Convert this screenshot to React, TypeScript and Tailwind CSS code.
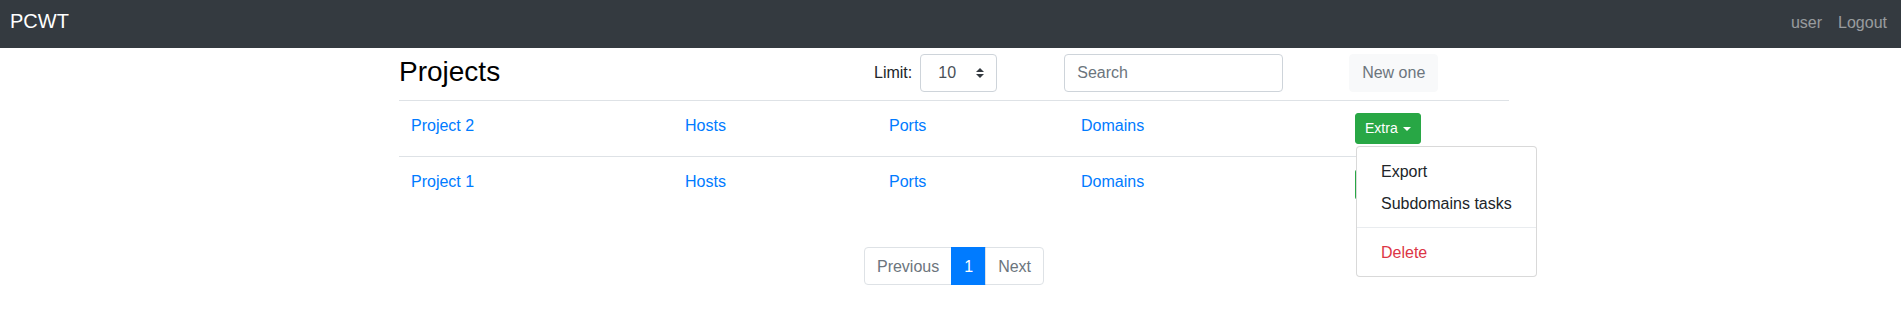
import React from 'react';

const font = "font-['Liberation_Sans',Arial,sans-serif]";

const projects = [
  { name: 'Project 2', open: true },
  { name: 'Project 1', open: false },
];

const Caret = () => (
  <span className="ml-[5px] inline-block w-0 h-0 border-t-[4.2px] border-t-white border-x-[4.2px] border-x-transparent align-middle" />
);

const ExtraMenu = ({ open }: { open: boolean }) => {
  return (
    <div className="relative inline-block">
      <button className="h-[31px] px-[9px] rounded-[3px] border border-[#28a745] bg-[#28a745] text-white text-[14px] leading-[21px] flex items-center">
        Extra
        <Caret />
      </button>
      {open && (
        <div className="absolute left-[1px] top-[33px] z-10 bg-white border border-black/15 rounded-[4px] py-[8px] whitespace-nowrap">
          <div className="px-[24px] pt-[5px] pb-[3px] leading-[24px] text-[#212529]">Export</div>
          <div className="px-[24px] pt-[5px] pb-[3px] leading-[24px] text-[#212529]">Subdomains tasks</div>
          <div className="my-[8px] border-t border-[#e9ecef]" />
          <div className="px-[24px] pt-[5px] pb-[3px] leading-[24px] text-[#dc3545]">Delete</div>
        </div>
      )}
    </div>
  );
};

const App = () => {
  return (
    <div className={`${font} text-[16px] bg-white min-h-[314px]`}>
      <nav className="h-[48px] bg-[#343a40] flex items-start justify-between pl-[10px] pr-[6px] pt-[6px]">
        <span className="text-white text-[20px] leading-[30px]">PCWT</span>
        <div className="flex pt-[5px]">
          <a className="px-[8px] leading-[24px] text-white/50">user</a>
          <a className="px-[8px] leading-[24px] text-white/50">Logout</a>
        </div>
      </nav>

      <div className="ml-[399px] w-[1110px]">
        <div className="mt-[6px] mb-[8px] h-[38px] flex items-center">
          <h3 className="w-[475px] text-[28px] leading-[34px] text-black -mt-[3px]">Projects</h3>
          <span className="text-[#212529] leading-[24px]">Limit:</span>
          <div className="ml-[8px] w-[77px] h-[38px] border border-[#ced4da] rounded-[4px] flex items-center justify-between pl-[17px] pr-[12px] text-[#495057]">
            <span>10</span>
            <svg width="8" height="10" viewBox="0 0 4 5">
              <path d="M2 0L0 2h4zm0 5L0 3h4z" fill="#343a40" />
            </svg>
          </div>
          <div className="ml-[67px] w-[219px] h-[38px] border border-[#ced4da] rounded-[4px] flex items-center px-[12px] text-[#6c757d]">
            Search
          </div>
          <button className="ml-[66px] w-[89px] h-[38px] rounded-[4px] bg-[#f8f9fa] border border-[#f8f9fa] text-[#6c757d]">
            New one
          </button>
        </div>

        {projects.map((p) => (
          <div key={p.name} className="grid grid-cols-[274px_204px_192px_274px_1fr] border-t border-[#dee2e6]">
            <div className="px-[12px] pt-[13px] leading-[24px] text-[#007bff]">{p.name}</div>
            <div className="px-[12px] pt-[13px] leading-[24px] text-[#007bff]">Hosts</div>
            <div className="px-[12px] pt-[13px] leading-[24px] text-[#007bff]">Ports</div>
            <div className="px-[12px] pt-[13px] leading-[24px] text-[#007bff]">Domains</div>
            <div className={`p-[12px] ${p.open ? 'z-10' : ''}`}>
              <ExtraMenu open={p.open} />
            </div>
          </div>
        ))}

        <div className="mt-[35px] flex justify-center">
          <div className="flex h-[38px] leading-[20px]">
            <span className="px-[12px] pt-[9px] pb-[7px] border border-[#dee2e6] rounded-l-[4px] text-[#6c757d]">Previous</span>
            <span className="px-[12px] pt-[9px] pb-[7px] border border-[#007bff] bg-[#007bff] text-white -ml-px">1</span>
            <span className="px-[12px] pt-[9px] pb-[7px] border border-[#dee2e6] rounded-r-[4px] text-[#6c757d] -ml-px">Next</span>
          </div>
        </div>
      </div>
    </div>
  );
};

export default App;
